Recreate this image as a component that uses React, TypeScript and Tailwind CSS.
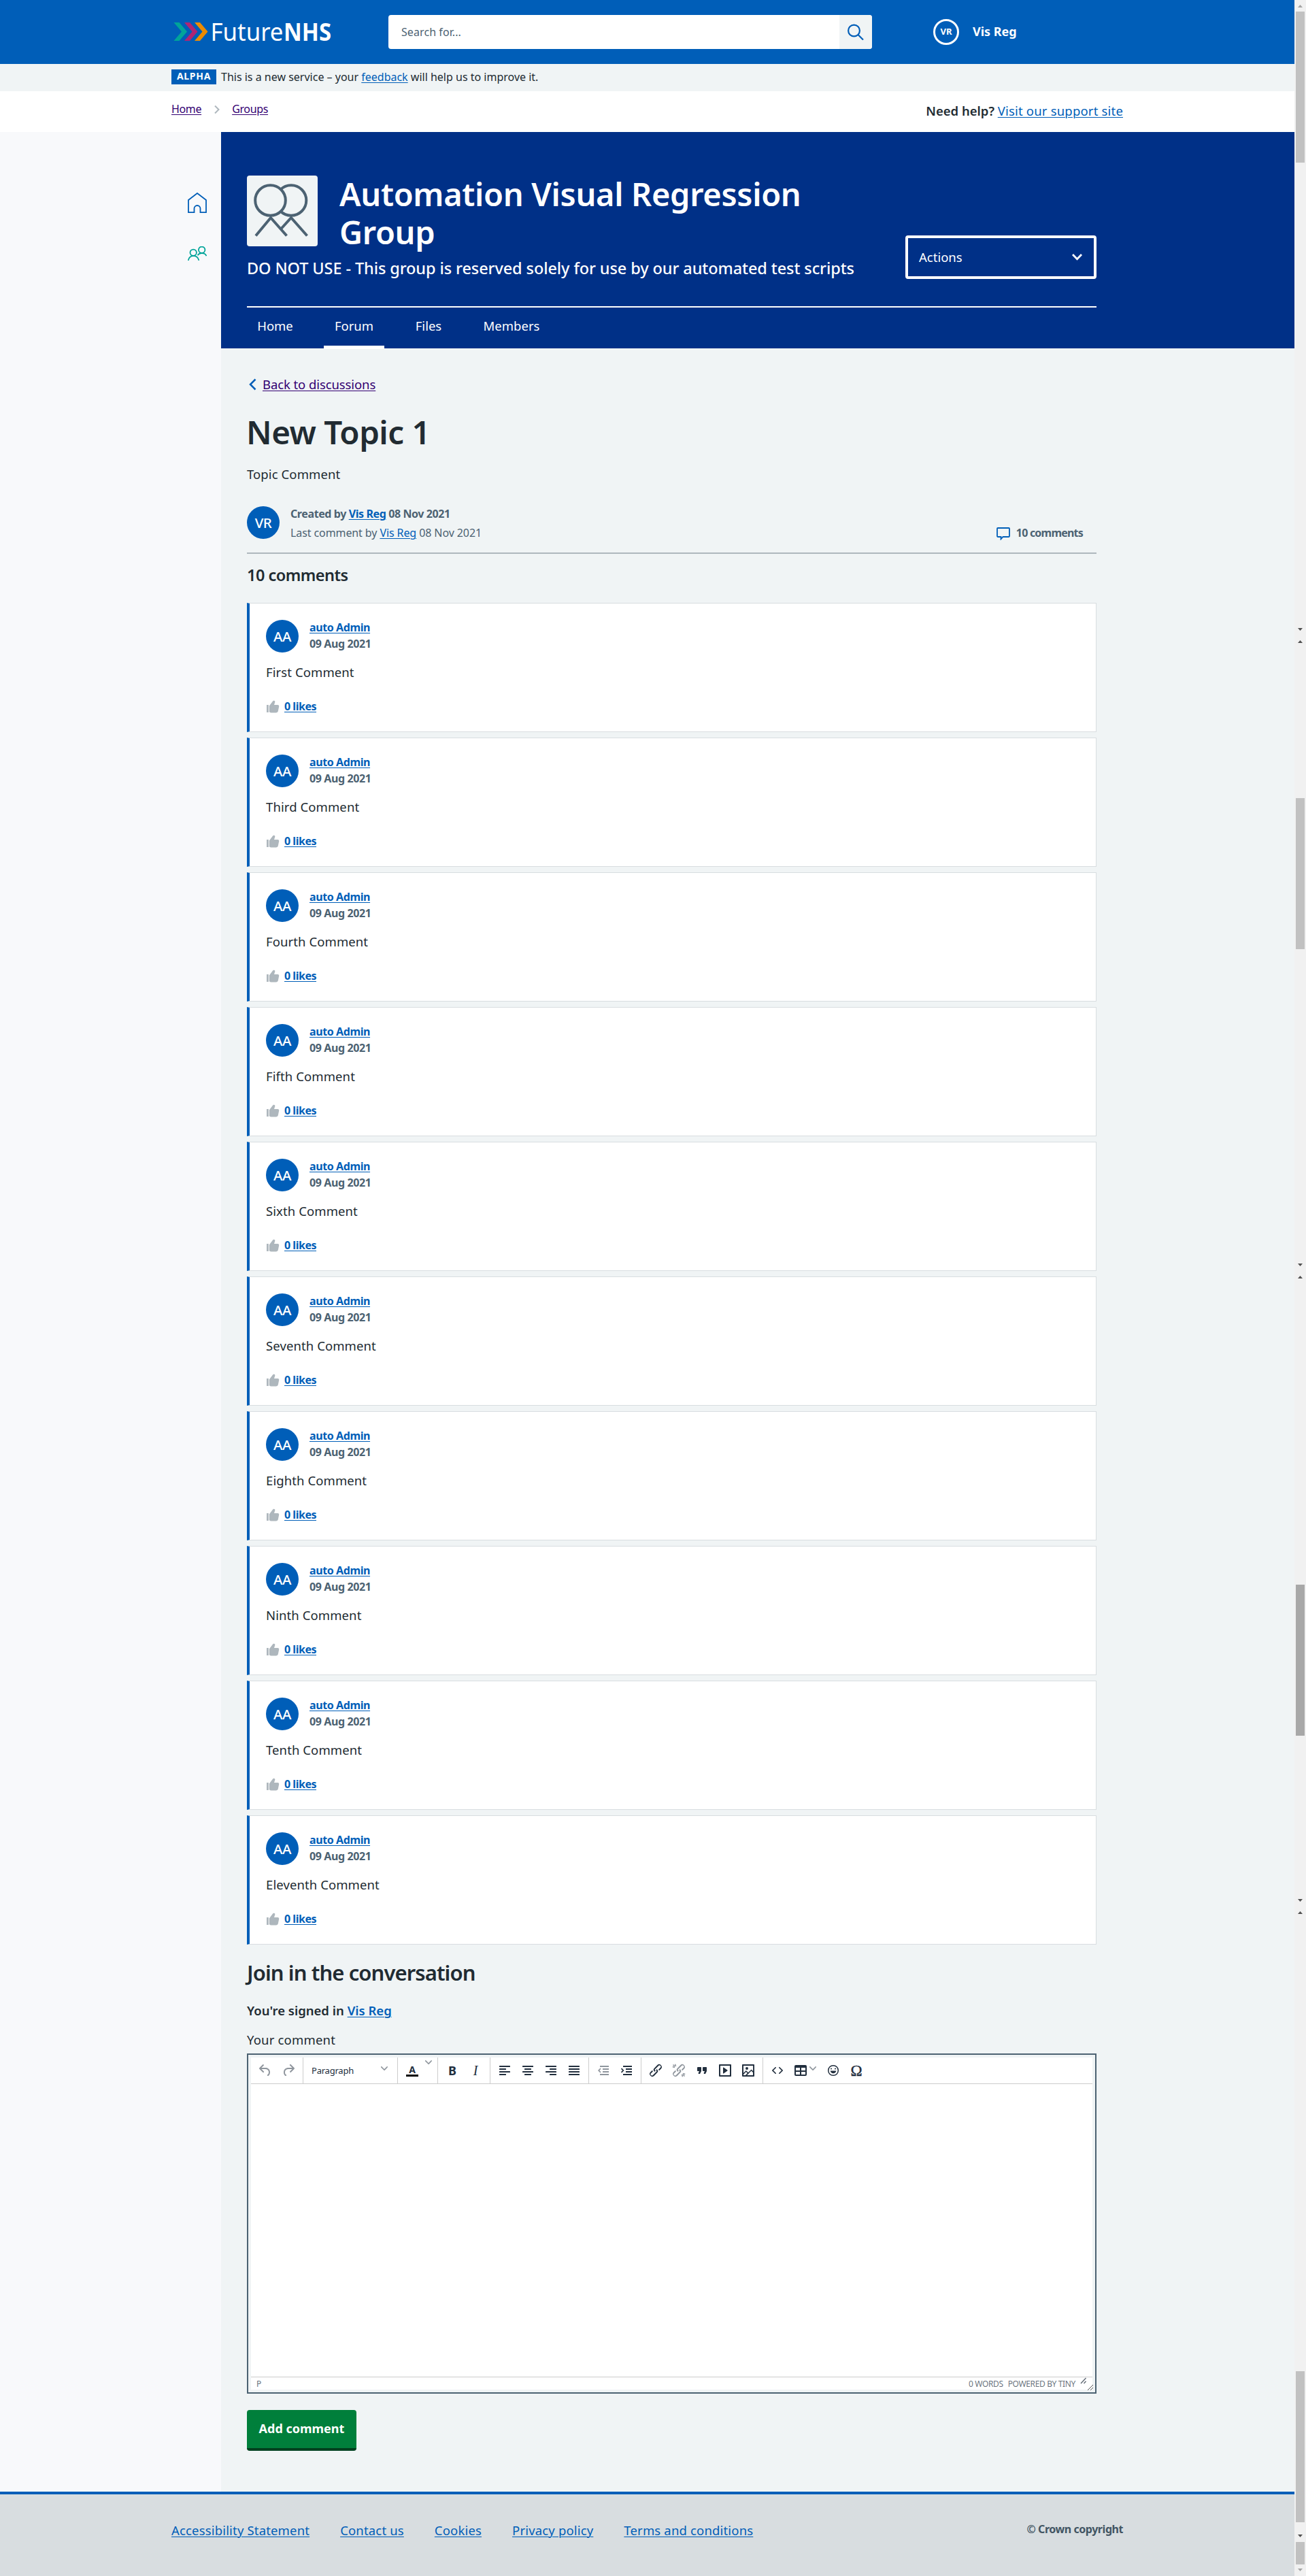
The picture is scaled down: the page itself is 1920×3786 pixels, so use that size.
import React from "react";

const COMMENTS = ["First", "Third", "Fourth", "Fifth", "Sixth", "Seventh", "Eighth", "Ninth", "Tenth", "Eleventh"];

const LINK = "text-[#005eb8] underline underline-offset-2 decoration-1";

function Logo() {
  return (
    <svg width="236" height="56" viewBox="0 -10 236 56" className="block">
      <path d="M0.5 4h8l11.5 13.5L8.500 31h-8L12 17.500z" fill="#00a499" />
      <path d="M16 4h8l11.500 13.500L24 31h-8l11.500-13.500z" fill="#ae2573" />
      <path d="M31 4h8l11.500 13.500L39 31h-8l11.500-13.500z" fill="#ed8b00" />
      <text x="54.500" y="30.500" textLength="107" lengthAdjust="spacingAndGlyphs" fontSize="36" fill="#fff">Future</text>
      <text x="162" y="30.500" textLength="70" lengthAdjust="spacingAndGlyphs" fontSize="36" fontWeight="700" fill="#fff">NHS</text>
    </svg>
  );
}

function TopBar() {
  return (
    <header className="flex h-[94px] items-center bg-[#005eb8] pl-[255px]">
      <Logo />
      <div className="ml-[80px] flex h-[50px] w-[711px] overflow-hidden rounded bg-white">
        <span className="flex-1 pl-[19px] text-[16px] leading-[50px] tracking-[0.005em] text-[#4c6272]">Search for...</span>
        <button className="flex w-12 items-center justify-center bg-[#f0f4f5]">
          <svg width="24" height="24" viewBox="0 0 24 24" fill="none" stroke="#005eb8" strokeWidth="2.200">
            <circle cx="9.500" cy="10" r="8.400" />
            <path d="M15.500 16l7.500 7.500" />
          </svg>
        </button>
      </div>
      <span className="ml-[90px] flex size-[38px] items-center justify-center rounded-full border-[3px] border-white text-[13px] font-bold text-white">VR</span>
      <span className="ml-5 pb-0.5 text-[18px] font-bold leading-7 text-white">Vis Reg</span>
    </header>
  );
}

function AlphaBanner() {
  return (
    <div className="flex h-10 items-start bg-[#f0f4f5] pl-[252px]">
      <span className="mt-2 h-[22px] w-[66px] bg-[#005eb8] text-center text-[14px] font-bold leading-[20px] tracking-[0.05em] text-white">ALPHA</span>
      <p className="ml-[7px] mt-[7px] text-[16px] leading-6">
        This is a new service – your <a className={LINK}>feedback</a> will help us to improve it.
      </p>
    </div>
  );
}

function Breadcrumbs() {
  return (
    <div className="flex h-[60px] justify-between bg-white pl-[252px] pr-[252px]">
      <nav className="flex items-start pt-3.5 text-[16px] leading-6 tracking-[-0.022em] text-[#330072]">
        <a className="underline underline-offset-2">Home</a>
        <svg width="8" height="12" viewBox="0 0 8 12" className="ml-[19px] mr-[18px] mt-[7px]" fill="none" stroke="#aeb7bd" strokeWidth="2">
          <path d="M1 0.500L6.500 6L1 11.500" />
        </svg>
        <a className="underline underline-offset-2">Groups</a>
      </nav>
      <p className="pt-[15px] text-[18.500px] leading-7">
        <span className="font-semibold">Need help?</span> <a className={`${LINK} tracking-[0.010em]`}>Visit our support site</a>
      </p>
    </div>
  );
}

function SideNav() {
  return (
    <aside className="flex w-[325px] flex-col items-end bg-[#f8f9fb] pr-[21px] pt-[89px]">
      <svg width="28" height="30" viewBox="0 0 28 30" fill="none" stroke="#005eb8" strokeWidth="1.800">
        <path d="M1 11L14 1l13 10v18.200h-8.500v-5.700a4.500 4.500 0 0 0-9 0v5.700H1z" />
      </svg>
      <svg width="28" height="21" viewBox="0 0 28 21" className="mt-[49px]" fill="none" stroke="#00a499" strokeWidth="1.800">
        <circle cx="8.200" cy="9.300" r="4.700" />
        <path d="M.8 20.800c.8-4 3.600-6.600 7.600-6.600s7 2.600 8 6.600" />
        <circle cx="20.700" cy="5.300" r="4.700" />
        <path d="M14.500 13.200c1.400-2 3.500-3 6.200-3 3.400 0 5.800 1.500 6.800 4" />
      </svg>
    </aside>
  );
}

function GroupHeader() {
  return (
    <section className="h-[318px] bg-[#003087] pl-[38px] pt-[63px] text-white">
      <div className="flex h-[193px] w-[1249px] justify-between">
        <div>
          <div className="flex h-[112px]">
            <svg width="104" height="104" viewBox="0 0 104 104" className="mt-px" fill="#f0f4f5" stroke="#4c6272" strokeWidth="4">
              <rect width="104" height="104" rx="4" stroke="none" />
              <circle cx="65" cy="36.500" r="22.300" />
              <path d="M50 78.500L65 62l23.500 26.500" fill="none" />
              <circle cx="34.500" cy="36.500" r="22.300" />
              <path d="M13 88.500L35 62l23.500 26.500" fill="none" />
            </svg>
            <h1 className="ml-8 w-[720px] text-[47px] font-semibold leading-[56px] tracking-[-0.007em]">Automation Visual Regression Group</h1>
          </div>
          <p className="mt-[9px] text-[23.500px] font-medium leading-8 tracking-[-0.004em]">
            DO NOT USE - This group is reserved solely for use by our automated test scripts
          </p>
        </div>
        <button className="mt-[89px] flex h-16 w-[281px] items-center justify-between rounded border-4 border-white pl-4 pr-[17px] text-[18.500px] leading-7">
          <span>Actions</span>
          <svg width="15" height="10" viewBox="0 0 15 10" fill="none" stroke="#fff" strokeWidth="2.800">
            <path d="M1 1l6.500 6.800L14 1" />
          </svg>
        </button>
      </div>
      <nav className="flex w-[1249px] gap-[30px] border-t-2 border-white text-center text-[18.500px] leading-[54px]">
        <a className="h-[60px] w-[83px]">Home</a>
        <a className="-mb-px h-[61px] w-[89px] border-b-[5px] border-white">Forum</a>
        <a className="h-[60px] w-[70px]">Files</a>
        <a className="h-[60px] w-[114px]">Members</a>
      </nav>
    </section>
  );
}

function Avatar({ initials }: { initials: string }) {
  return (
    <span className="flex size-12 shrink-0 items-center justify-center rounded-full bg-[#005eb8] text-[20.500px] font-medium tracking-[-0.02em] text-white">
      {initials}
    </span>
  );
}

function CommentCard({ name }: { name: string }) {
  return (
    <article className="h-[190px] border border-l-4 border-[#d8dde0] border-l-[#005eb8] bg-white pl-6 pt-[23px]">
      <div className="flex gap-4">
        <div className="pt-px">
          <Avatar initials="AA" />
        </div>
        <div className="text-[16px] font-bold leading-6 tracking-[-0.025em]">
          <a className={`block ${LINK}`}>auto Admin</a>
          <span className="block text-[#4c6272]">09 Aug 2021</span>
        </div>
      </div>
      <p className="mt-[15px] text-[18.500px] leading-7 tracking-[0.005em]">{name} Comment</p>
      <div className="mt-6 flex items-center">
        <svg width="20" height="20" viewBox="0 0 20 20" className="mt-0.5" fill="#aeb7bd">
          <path d="M1 7h2.800v11H1zM4.800 8.500L9.500 2.300C10 1.500 10.600.8 11.700.8c1.400 0 2 1.200 1.500 2.500L12 7h5.200c1.600 0 2.200 1 2 2.300l-1.300 6.500c-.4 1.800-1.400 2.700-3.200 2.700H8.600c-1.700 0-2.800-.3-3.800-1.200z" />
        </svg>
        <a className={`ml-[7px] text-[16px] font-bold leading-6 tracking-[-0.03em] ${LINK}`}>0 likes</a>
      </div>
    </article>
  );
}

function Tool({ children, dim }: { children: React.ReactNode; dim?: boolean }) {
  return (
    <span className={`flex h-[34px] w-[34px] items-center justify-center ${dim ? "opacity-50" : ""}`}>
      <svg width="24" height="24" viewBox="0 0 24 24" fill="#222f3e" fillRule="evenodd">
        {children}
      </svg>
    </span>
  );
}

function Chevron({ className }: { className?: string }) {
  return (
    <svg width="10" height="10" viewBox="0 0 10 10" className={className} fill="#222f3e" opacity="0.500">
      <path d="M8.700 2.200c.3-.3.8-.3 1 0 .4.4.4.9 0 1.200L5.700 7.800c-.3.3-.9.3-1.200 0L.2 3.400a.8.8 0 0 1 0-1.200c.3-.3.8-.3 1.100 0L5 6l3.700-3.800Z" />
    </svg>
  );
}

function AlignIcon({ x }: { x: number[] }) {
  return (
    <>
      {x.map((left, i) => (
        <rect key={i} x={left < 0 ? 4 : left} y={5 + i * 4} width={left < 0 ? 16 : 10} height="2" rx="0.500" />
      ))}
    </>
  );
}

const LINK_ICON =
  "M6.2 12.3a1 1 0 0 1 1.4 1.400l-2 2a2 2 0 1 0 2.600 2.800l4.800-4.800a1 1 0 0 0 0-1.400 1 1 0 1 1 1.400-1.300 2.900 2.900 0 0 1 0 4L9.600 20a3.900 3.900 0 0 1-5.500-5.500l2-2Zm11.600-.6a1 1 0 0 1-1.400-1.400l2-2a2 2 0 1 0-2.600-2.800L11 10.300a1 1 0 0 0 0 1.400A1 1 0 1 1 9.600 13a2.900 2.900 0 0 1 0-4L14.400 4a3.900 3.900 0 0 1 5.500 5.500l-2 2Z";

const GROUP = "flex h-[38px] items-center border-r border-[#ccc] px-1";

function Toolbar() {
  return (
    <div className="flex h-[39px] border-b border-[#ccc]">
      <div className={GROUP}>
        <Tool dim>
          <path d="M6.400 8H12c3.700 0 6.200 2 6.800 5.100.6 2.700-.4 5.600-2.300 6.800a1 1 0 0 1-1-1.800c1.100-.6 1.800-2.700 1.400-4.600-.5-2.100-2.100-3.500-4.900-3.500H6.400l3.300 3.300a1 1 0 1 1-1.400 1.400l-5-5a1 1 0 0 1 0-1.400l5-5a1 1 0 0 1 1.400 1.400L6.400 8Z" />
        </Tool>
        <Tool dim>
          <path d="M17.600 10H12c-2.800 0-4.400 1.400-4.900 3.500-.4 2 .3 4 1.400 4.600a1 1 0 1 1-1 1.800c-2-1.200-2.900-4.100-2.300-6.800.6-3 3-5.100 6.800-5.100h5.600l-3.300-3.300a1 1 0 1 1 1.400-1.400l5 5a1 1 0 0 1 0 1.400l-5 5a1 1 0 0 1-1.400-1.400l3.300-3.300Z" />
        </Tool>
      </div>
      <div className={GROUP}>
        <span className="flex w-[130px] items-center justify-between pl-2 pr-2">
          <span className="text-[13px] leading-5 tracking-[-0.017em] text-[#222f3e]">Paragraph</span>
          <Chevron className="mb-[7px] mr-[2px]" />
        </span>
      </div>
      <div className={GROUP}>
        <Tool>
          <text x="12" y="16" textAnchor="middle" fontSize="14" fontWeight="700">A</text>
          <rect x="3" y="18" width="18" height="3" fill="#000" />
        </Tool>
        <Chevron className="mb-[25px] ml-0.5 mr-1" />
      </div>
      <div className={GROUP}>
        <Tool>
          <text x="12" y="18.500" textAnchor="middle" fontSize="18" fontWeight="700">B</text>
        </Tool>
        <Tool>
          <text x="12" y="18.500" textAnchor="middle" fontSize="20" fontStyle="italic" fontFamily="'Liberation Serif', serif">I</text>
        </Tool>
      </div>
      <div className={GROUP}>
        <Tool><AlignIcon x={[-1, 4, -1, 4]} /></Tool>
        <Tool><AlignIcon x={[-1, 7, -1, 7]} /></Tool>
        <Tool><AlignIcon x={[-1, 10, -1, 10]} /></Tool>
        <Tool><AlignIcon x={[-1, -1, -1, -1]} /></Tool>
      </div>
      <div className={GROUP}>
        <Tool dim>
          <path d="M7 5h13v2H7zM11 9h9v2h-9zM11 13h9v2h-9zM7 17h13v2H7z" />
          <path d="M8 9.200L5.200 12 8 14.800" fill="none" stroke="#222f3e" strokeWidth="1.700" />
        </Tool>
        <Tool>
          <path d="M7 5h13v2H7zM11 9h9v2h-9zM11 13h9v2h-9zM7 17h13v2H7z" />
          <path d="M4.500 9.200L7.300 12l-2.800 2.800" fill="none" stroke="#222f3e" strokeWidth="1.700" />
        </Tool>
      </div>
      <div className={GROUP}>
        <Tool><path d={LINK_ICON} /></Tool>
        <Tool dim>
          <path d={LINK_ICON} />
          <path d="M6.500 2.800l1 3.200M2.800 6.500l3.200 1M16.500 17.800l1 3.400M17.800 16.500l3.400 1M3.500 3.500l2.500 2.500M18 18l2.500 2.500" fill="none" stroke="#222f3e" strokeWidth="1.500" />
        </Tool>
        <Tool>
          <path d="M7.500 17h.9c.4 0 .7-.2.9-.6L11 13V8c0-.6-.4-1-1-1H6a1 1 0 0 0-1 1v4c0 .6.4 1 1 1h2l-1.300 2.700a1 1 0 0 0 .8 1.300Zm8 0h.9c.4 0 .7-.2.9-.6L19 13V8c0-.6-.4-1-1-1h-4a1 1 0 0 0-1 1v4c0 .6.4 1 1 1h2l-1.300 2.700a1 1 0 0 0 .8 1.300Z" />
        </Tool>
        <Tool>
          <path d="M4 3h16c.6 0 1 .4 1 1v16c0 .6-.4 1-1 1H4a1 1 0 0 1-1-1V4c0-.6.4-1 1-1Zm1 2v14h14V5H5Zm4.800 2.600 5.600 4a.5.5 0 0 1 0 .8l-5.600 4A.5.5 0 0 1 9 16V8a.5.5 0 0 1 .8-.4Z" />
        </Tool>
        <Tool>
          <path d="m5 15.700 3.300-3.200c.3-.3.7-.3 1 0L12 15l4.100-4c.3-.4.8-.4 1 0l2 1.900V5H5v10.700ZM5 18V19h3l2.800-2.900-2-2L5 17.900Zm14-3-2.500-2.400-6.400 6.500H19v-4ZM4 3h16c.6 0 1 .4 1 1v16c0 .6-.4 1-1 1H4a1 1 0 0 1-1-1V4c0-.6.4-1 1-1Zm6 8a2 2 0 1 0 0-4 2 2 0 0 0 0 4Z" />
        </Tool>
      </div>
      <div className="flex h-[38px] items-center px-1">
        <Tool>
          <path d="M9.800 15.700c.3.3.3.8 0 1-.3.4-.9.4-1.200 0l-4.400-4.100a.8.8 0 0 1 0-1.200l4.400-4.200c.3-.3.9-.3 1.200 0 .3.3.3.8 0 1.100L6 12l3.800 3.700ZM14.200 15.700c-.3.3-.3.8 0 1 .4.4.9.4 1.200 0l4.400-4.100c.3-.3.3-.9 0-1.200l-4.400-4.200a.8.8 0 0 0-1.200 0c-.3.3-.3.8 0 1.100L18 12l-3.800 3.700Z" />
        </Tool>
        <span className="flex w-12 items-center">
          <Tool>
            <path d="M19 4a2 2 0 0 1 2 2v12a2 2 0 0 1-2 2H5a2 2 0 0 1-2-2V6c0-1.100.9-2 2-2h14ZM5 14v4h6v-4H5Zm14 0h-6v4h6v-4Zm0-6h-6v4h6V8ZM5 12h6V8H5v4Z" />
          </Tool>
          <Chevron className="-ml-[4px] mb-[6px]" />
        </span>
        <Tool>
          <circle cx="12" cy="12" r="7.300" fill="none" stroke="#222f3e" strokeWidth="1.500" />
          <path d="M9 8.500a1 1 0 1 1 0 2 1 1 0 0 1 0-2ZM15 8.500a1 1 0 1 1 0 2 1 1 0 0 1 0-2ZM7.600 12.500h8.800c-.4 2-2.300 3.800-4.400 3.800s-3.900-1.800-4.400-3.800Z" />
        </Tool>
        <Tool>
          <text x="12" y="19.500" textAnchor="middle" fontSize="23" fontFamily="'Liberation Serif', serif" stroke="#222f3e" strokeWidth="0.400">Ω</text>
        </Tool>
      </div>
    </div>
  );
}

function Editor() {
  return (
    <div className="relative mt-1.5 h-[500px] border-2 border-[#4c6272] p-1">
      <div className="flex h-full flex-col bg-white">
        <Toolbar />
        <div className="flex-1" />
        <div className="flex h-[19px] justify-between border-t border-[#ccc] pl-2 pr-2 text-[12px] leading-[20px] tracking-[-0.03em] text-[#222f3e]/70">
          <span>P</span>
          <span className="flex gap-[7px]">
            <span>0 WORDS</span>
            <span>POWERED BY TINY</span>
            <svg width="10" height="10" viewBox="0 0 10 10" fill="none" stroke="#222f3e" strokeOpacity="0.700" strokeWidth="1.500">
              <path d="M1 9L8.500 1M5.500 9l3-3.200" />
            </svg>
          </span>
        </div>
      </div>
      <svg width="10" height="10" viewBox="0 0 10 10" className="absolute bottom-0.5 right-0.5" fill="none" stroke="#555" strokeWidth="1">
        <path d="M1 9l8-8M5 9l4-4" />
      </svg>
    </div>
  );
}

function Discussion() {
  return (
    <section className="w-[1287px] pb-[60px] pl-[38px] pt-[39px]">
      <a className="flex items-center text-[18.500px] leading-7 text-[#330072]">
        <svg width="11" height="18" viewBox="0 0 11 18" className="ml-[3px] mr-[9px]" fill="none" stroke="#005eb8" strokeWidth="2.500">
          <path d="M9.500 1.500L2 9l7.500 7.500" />
        </svg>
        <span className="underline underline-offset-2 tracking-[-0.005em]">Back to discussions</span>
      </a>
      <h2 className="-ml-px mt-[28px] text-[47.500px] font-semibold leading-[56px] tracking-[-0.011em]">New Topic 1</h2>
      <p className="mt-5 text-[18.500px] leading-7 tracking-[0.005em]">Topic Comment</p>
      <div className="mt-[30px] flex h-14 text-[16px] leading-7 text-[#4c6272]">
        <div className="pt-[3px]">
          <Avatar initials="VR" />
        </div>
        <div className="ml-4 flex-1">
          <p className="font-bold tracking-[-0.025em]">Created by <a className={LINK}>Vis Reg</a> 08 Nov 2021</p>
          <p className="tracking-[-0.006em]">Last comment by <a className={LINK}>Vis Reg</a> 08 Nov 2021</p>
        </div>
        <div className="flex items-start pr-5 pt-7">
          <svg width="20" height="19" viewBox="0 0 20 19" className="mr-[9px] mt-[6px]" fill="none" stroke="#005eb8" strokeWidth="1.800">
            <path d="M1.900 1h16.200a.9.900 0 0 1 .9.900v11.200a.9.900 0 0 1-.9.900H9.500L6.500 17.300V14H1.900a.9.900 0 0 1-.9-.9V1.900A.9.900 0 0 1 1.900 1z" />
          </svg>
          <span className="font-bold tracking-[-0.049em]">10 comments</span>
        </div>
      </div>
      <hr className="mt-[15px] border-t-2 border-[#aeb7bd]" />
      <h3 className="mt-[15px] text-[23.500px] font-semibold leading-8 tracking-[-0.022em]">10 comments</h3>
      <div className="mt-[25px] flex flex-col gap-2">
        {COMMENTS.map((c) => (
          <CommentCard key={c} name={c} />
        ))}
      </div>
      <h3 className="mt-[21px] text-[31px] font-semibold leading-10 tracking-[-0.029em]">Join in the conversation</h3>
      <p className="mt-[22px] text-[18.500px] font-semibold leading-7">
        You're signed in <a className={LINK}>Vis Reg</a>
      </p>
      <p className="mt-[15px] text-[18.500px] leading-7 tracking-[0.010em]">Your comment</p>
      <Editor />
      <button className="mt-6 block h-[60px] w-[161px] rounded border-b-4 border-[#00401e] bg-[#007f3b] pb-0.5 text-[18px] font-bold text-white">Add comment</button>
    </section>
  );
}

function Footer() {
  return (
    <footer className="flex h-[124px] justify-between border-t-4 border-[#005eb8] bg-[#d8dde0] pl-[252px] pr-[252px]">
      <nav className="flex gap-[45px] pt-[39px] text-[18.500px] leading-7 tracking-[0.009em]">
        {["Accessibility Statement", "Contact us", "Cookies", "Privacy policy", "Terms and conditions"].map((t) => (
          <a key={t} className={LINK}>{t}</a>
        ))}
      </nav>
      <p className="pt-[39px] text-[16px] font-bold leading-6 tracking-[-0.028em] text-[#425563]">© Crown copyright</p>
    </footer>
  );
}

function Arrow({ up, light, className }: { up?: boolean; light?: boolean; className: string }) {
  return (
    <svg width="7" height="4" viewBox="0 0 7 4" className={`block shrink-0 ${className}`} fill={light ? "#a3a3a3" : "#505050"}>
      <path d={up ? "M0 4L3.500 0L7 4z" : "M0 0h7L3.500 4z"} />
    </svg>
  );
}

function Scrollbar() {
  return (
    <div className="flex w-[17px] shrink-0 flex-col items-center bg-[#f1f1f1]">
      <Arrow up light className="mt-[7px]" />
      <div className="mt-[6px] h-[222px] w-[13px] bg-[#c1c1c1]" />
      <Arrow className="mt-[684px]" />
      <Arrow up className="mt-[14px]" />
      <div className="mt-[228px] h-[222px] w-[13px] bg-[#c1c1c1]" />
      <Arrow className="mt-[462px]" />
      <Arrow up className="mt-[14px]" />
      <div className="mt-[450px] h-[222px] w-[13px] bg-[#a8a8a8]" />
      <Arrow className="mt-[240px]" />
      <Arrow up className="mt-[14px]" />
      <div className="mt-[672px] h-[222px] w-[13px] bg-[#c1c1c1]" />
      <Arrow className="mt-[18px]" />
      <div className="mt-[7px] h-[33px] w-[13px] bg-[#c1c1c1]" />
      <Arrow light className="mt-[6px]" />
    </div>
  );
}

export default function App() {
  return (
    <div className="flex h-[3786px] w-[1920px] overflow-hidden bg-white font-['Noto_Sans',sans-serif] text-[#212b32]">
      <div className="flex w-[1903px] shrink-0 flex-col">
        <TopBar />
        <AlphaBanner />
        <Breadcrumbs />
        <div className="flex flex-1">
          <SideNav />
          <main className="flex-1 bg-[#f0f4f5]">
            <GroupHeader />
            <Discussion />
          </main>
        </div>
        <Footer />
      </div>
      <Scrollbar />
    </div>
  );
}
